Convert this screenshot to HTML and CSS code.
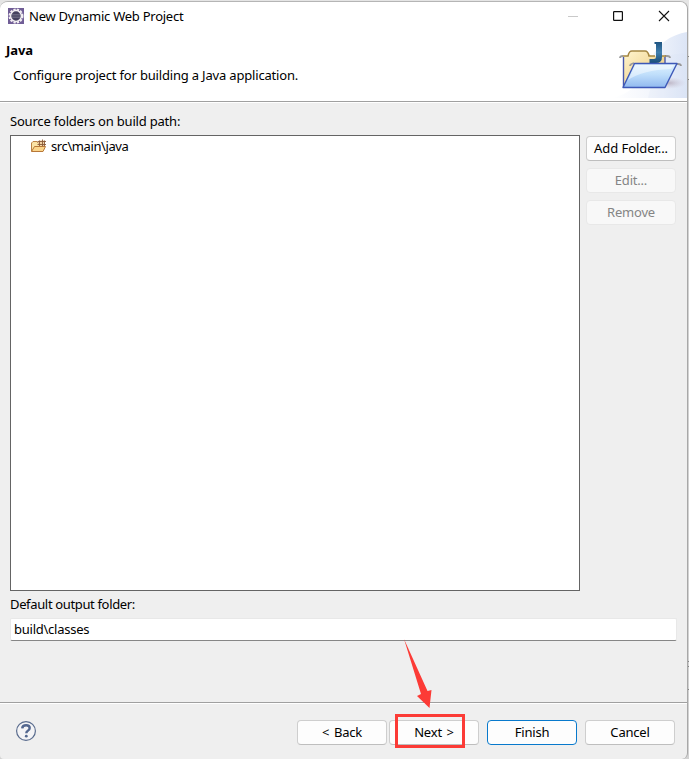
FILE: index.html
```html
<!DOCTYPE html>
<html lang="en">
<head>
<meta charset="utf-8">
<title>New Dynamic Web Project</title>
<link rel="stylesheet" href="styles.css">
</head>
<body>
<div class="window">
  <header class="titlebar">
    <svg class="app-icon" width="16" height="16" viewBox="0 0 16 16">
      <rect width="16" height="16" fill="#705d96"/>
      <circle cx="8" cy="8" r="6.300" fill="none" stroke="#f2eef2" stroke-width="2.400" stroke-dasharray="2.200 1.100"/>
      <circle cx="8" cy="8" r="5.400" fill="#45415f" stroke="#f2eef2" stroke-width="1.500"/>
      <path d="M4 6.500h8M3.500 8h9M4 9.500h8" stroke="#77758c" stroke-width=".7"/>
    </svg>
    <span class="caption">New Dynamic Web Project</span>
    <svg class="controls" width="106" height="12" viewBox="0 0 106 12">
      <path d="M0 6.500h10" stroke="#c9c9c9"/>
      <rect x="45.600" y="1.600" width="8.800" height="8.800" rx=".6" fill="none" stroke="#111" stroke-width="1.200"/>
      <path d="M91 1l10 10M101 1L91 11" stroke="#111" stroke-width="1.100"/>
    </svg>
  </header>
  <section class="banner">
    <div class="banner-text">
      <h1>Java</h1>
      <p>Configure project for building a Java application.</p>
    </div>
    <svg class="banner-art" width="74" height="66" viewBox="0 0 74 66">
      <defs>
        <linearGradient id="sweep" x1="0" x2="1"><stop offset="0" stop-color="#fff"/><stop offset=".5" stop-color="#f3f6fc"/><stop offset="1" stop-color="#dce5f6"/></linearGradient>
        <linearGradient id="back" x1="0" y1="0" x2="1" y2="1"><stop offset="0" stop-color="#fff5cf"/><stop offset="1" stop-color="#e9c372"/></linearGradient>
        <linearGradient id="front" x1="0" y1="0" x2="0" y2="1"><stop offset="0" stop-color="#e1f2ff"/><stop offset=".45" stop-color="#c0dffb"/><stop offset="1" stop-color="#91b9ef"/></linearGradient>
        <linearGradient id="letter" x1="0" y1="0" x2="0" y2="1"><stop offset="0" stop-color="#1f5582"/><stop offset=".5" stop-color="#417fae"/><stop offset="1" stop-color="#194c78"/></linearGradient>
        <radialGradient id="shade"><stop offset="0" stop-color="#a99bab" stop-opacity=".65"/><stop offset="1" stop-color="#c8bfd0" stop-opacity="0"/></radialGradient>
      </defs>
      <path d="M0 66C25 59 30 44 38 26Q50 4 74 0V66Z" fill="url(#sweep)"/>
      <path d="M44 30Q56 20 74 22V66H35Z" fill="#d5e0f5" opacity=".2"/>
      <ellipse cx="56" cy="51" rx="17" ry="6" fill="url(#shade)"/>
      <path d="M7 26q0-2 3-2M52 24h2q3 0 3 2" fill="none" stroke="#9b9b9b" stroke-width="1.800"/>
      <path d="M10 55V24h5l3-4q1-1 3-1h11q2 0 3 1l3 4h14v12L45 55Z" fill="url(#back)"/>
      <path d="M10 24h5q1-5 4-5h13q3 0 4 5h6M49 24h4" fill="none" stroke="#a48642" stroke-width="1.500"/>
      <path d="M10.500 55V25M52 25v7" stroke="#4858ac" stroke-width="1.400"/>
      <path d="M41.500 10H49V25Q49 31 43 31H36.500V27H41Q43 27 43 25V12H41.500Z" fill="url(#letter)"/>
      <path d="M17 34q0-2 4-3M64 32h1q3 0 3 2" fill="none" stroke="#999" stroke-width="1.800"/>
      <path d="M21.500 31.500H64L52 55.500H10Z" fill="url(#front)" stroke="#3d58b8" stroke-width="1.400" stroke-linejoin="round"/>
      <path d="M22.500 33H61L58 37Q30 38 15 48Z" fill="#fff" opacity=".45"/>
    </svg>
  </section>
  <main class="content">
    <div class="label source-label">Source folders on build path:</div>
    <div class="folders">
      <div class="list">
        <div class="item">
          <svg class="folder-icon" width="16" height="14" viewBox="0 0 16 14">
            <path d="M.5 12V4l1.500-1.500H6L7 4h5v8Z" fill="#fae3a5" stroke="#bb8143"/>
            <path d="M7.500 1.500h6v5h-6z" fill="#f1d2a4"/>
            <path d="M6.500 2.500h8.500M6.500 5.500h8.500M8.500 1.500v6M11.500 .5v7M13.500 1.500v6" stroke="#8a5a38" stroke-width=".9"/>
            <path d="M.5 12.500L3.500 7.500h11L12 12.500Z" fill="#fbd58b" stroke="#b87838" stroke-linejoin="round"/>
          </svg>
          <span class="path">src\main\java</span>
        </div>
      </div>
      <div class="side">
        <button class="button"><span class="t-add">Add Folder...</span></button>
        <button class="button" disabled>Edit...</button>
        <button class="button" disabled>Remove</button>
      </div>
    </div>
    <div class="label output-label">Default output folder:</div>
    <div class="field"><span class="output">build\classes</span></div>
  </main>
  <footer class="footer">
    <svg class="help" width="22" height="22" viewBox="0 0 22 22">
      <circle cx="11" cy="11" r="9.400" fill="#f4f4f6" stroke="#5a6c8e" stroke-width="1.200"/>
      <path d="M7.200 8.300Q7.500 5.300 11.100 5.300Q14.700 5.300 14.700 8.100Q14.700 9.800 12.900 10.700Q11.300 11.600 11.300 13.200" fill="none" stroke="#53678f" stroke-width="2.400"/>
      <circle cx="11.300" cy="16.200" r="1.400" fill="#53678f"/>
    </svg>
    <div class="actions">
      <button class="button spaced">&lt; Back</button>
      <div class="next"><button class="button spaced">Next &gt;</button><i class="highlight"></i>
        <svg class="arrow" width="30" height="72" viewBox="0 0 30 72"><path d="M1 0L24.500 52L28.500 51L26.500 69L14 57L18 55Z" fill="#fc3b36"/></svg>
      </div>
      <button class="button primary">Finish</button>
      <button class="button">Cancel</button>
    </div>
  </footer>
</div>
</body>
</html>
```
FILE: styles.css
```css
* { box-sizing: border-box; }
body {
  margin: 0;
  width: 689px;
  height: 759px;
  overflow: hidden;
  padding-top: 1px;
  background: linear-gradient(#e5e5e5 0 56px, #858585 56px 57px, #dcdcdc 57px 79px, #858585 79px 80px, #d2d2d2 80px 661px, #858585 661px 662px, #d2d2d2 662px 666px, #858585 666px 667px, #d2d2d2 667px 689px, #858585 689px 690px, #d2d2d2 690px);
  font: 13px/18px "Noto Sans", sans-serif;
  letter-spacing: -0.2px;
  color: #000;
}
.window {
  width: 688px;
  height: 758px;
  display: flex;
  flex-direction: column;
  background: #efefef;
  border-top: 1px solid #b5b5b5;
  border-right: 1px solid #a8a8a8;
  border-radius: 8px 8px 6px 4px;
  overflow: hidden;
}
.titlebar {
  height: 30px;
  flex: none;
  display: flex;
  align-items: center;
  padding: 0 13px 2px 8px;
  background: #fff;
}
.caption { margin-left: 5px; letter-spacing: -0.25px; }
.controls { margin-left: auto; }
.banner {
  height: 70px;
  flex: none;
  display: flex;
  justify-content: space-between;
  background: #fff;
  border-bottom: 1px solid #a0a0a0;
  box-shadow: 0 1px #fff;
}
.banner-text { padding: 9px 0 0 6px; }
h1 { margin: 0; font-size: 13px; line-height: 18px; letter-spacing: -0.1px; }
p { margin: 7px 0 0 7px; letter-spacing: -0.18px; }
.content { padding: 10px 11px 0 10px; height: 600px; flex: none; }
.label { height: 18px; }
.folders { display: flex; gap: 6px; height: 456px; margin-top: 5px; }
.list { width: 570px; border: 1px solid #646464; background: #fff; }
.item { display: flex; align-items: center; height: 20px; padding-left: 20px; }
.path { margin-left: 4px; letter-spacing: -0.4px; }
.side { display: flex; flex-direction: column; gap: 7px; padding-top: 1px; }
.button {
  display: block;
  width: 90px;
  height: 25px;
  padding: 0 0 1px;
  border: 1px solid #cecece;
  border-bottom-color: #bebebe;
  border-radius: 4px;
  background: #fdfdfd;
  color: #000;
  font: inherit;
  letter-spacing: inherit;
  text-align: center;
}
.t-add { letter-spacing: -0.05px; }
.spaced { word-spacing: 1.5px; }
.button:disabled { color: #858585; background: #f8f8f8; border-color: #e8e8e8; }
.output-label { margin-top: 4px; letter-spacing: -0.35px; }
.field {
  height: 23px;
  margin: 5px -1px 0 0;
  padding: 1px 3px;
  background: #fff;
  border: 1px solid #e8e8e8;
  border-bottom-color: #868686;
  border-radius: 2px;
}
.output { letter-spacing: -0.25px; }
.footer {
  flex: 1;
  display: flex;
  justify-content: space-between;
  border-top: 1px solid #a0a0a0;
  box-shadow: inset 0 1px #fff;
  padding: 17px 12px 0 15px;
}
.actions { display: flex; gap: 8px; }
.next { position: relative; margin-left: -6px; }
.highlight {
  position: absolute;
  left: 6px;
  top: -6px;
  width: 70px;
  height: 34px;
  border: 3px solid #fc3b36;
}
.arrow { position: absolute; left: 14px; top: -81px; }
.primary { border-color: #0879cc; }
```
